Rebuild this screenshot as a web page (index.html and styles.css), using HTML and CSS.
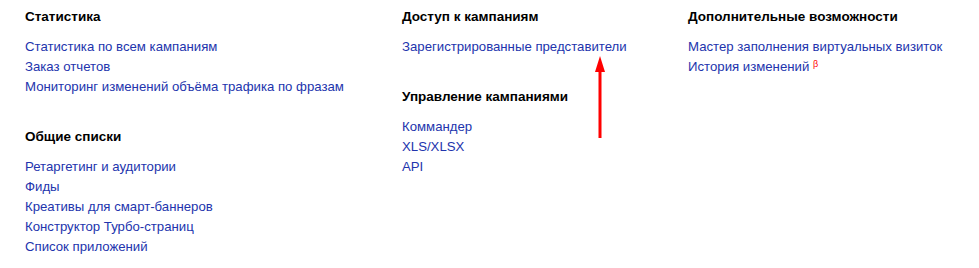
FILE: index.html
```html
<!DOCTYPE html>
<html lang="ru">
<head>
<meta charset="utf-8">
<link rel="stylesheet" href="styles.css">
</head>
<body>
<div class="page">
  <div class="col col-1">
    <section class="group">
      <h3 class="title">Статистика</h3>
      <ul class="links">
        <li><a href="#">Статистика по всем кампаниям</a></li>
        <li><a href="#">Заказ отчетов</a></li>
        <li><a href="#">Мониторинг изменений объёма трафика по фразам</a></li>
      </ul>
    </section>
    <section class="group">
      <h3 class="title">Общие списки</h3>
      <ul class="links">
        <li><a href="#">Ретаргетинг и аудитории</a></li>
        <li><a href="#">Фиды</a></li>
        <li><a href="#">Креативы для смарт-баннеров</a></li>
        <li><a href="#">Конструктор Турбо-страниц</a></li>
        <li><a href="#">Список приложений</a></li>
      </ul>
    </section>
  </div>
  <div class="col col-2">
    <section class="group">
      <h3 class="title">Доступ к кампаниям</h3>
      <ul class="links">
        <li><a href="#">Зарегистрированные представители</a></li>
      </ul>
    </section>
    <section class="group">
      <h3 class="title">Управление кампаниями</h3>
      <ul class="links">
        <li><a href="#">Коммандер</a></li>
        <li><a href="#">XLS/XLSX</a></li>
        <li><a href="#">API</a></li>
      </ul>
    </section>
    <svg class="arrow" width="12" height="84" viewBox="0 0 12 84">
      <polygon points="6,0 11,16 1,16" fill="#ff0000"/>
      <rect x="4.5" y="14" width="3" height="68" fill="#ff0000"/>
    </svg>
  </div>
  <div class="col col-3">
    <section class="group">
      <h3 class="title">Дополнительные возможности</h3>
      <ul class="links">
        <li><a href="#">Мастер заполнения виртуальных визиток</a></li>
        <li><a href="#">История изменений</a> <sup class="beta">β</sup></li>
      </ul>
    </section>
  </div>
</div>
</body>
</html>
```
FILE: styles.css
```css
html, body {
  margin: 0;
  padding: 0;
  background: #ffffff;
}
body {
  font-family: "Liberation Sans", Arial, sans-serif;
  color: #000;
}
.page {
  display: grid;
  grid-template-columns: 377px 286px 1fr;
  padding: 7px 0 0 25px;
}
.col {
  display: flex;
  flex-direction: column;
  gap: 30px;
  position: relative;
}
.title {
  margin: 0 0 10px;
  font-size: 13.5px;
  line-height: 20px;
  font-weight: bold;
}
.links {
  list-style: none;
  margin: 0;
  padding: 0;
}
.links li {
  font-size: 13.2px;
  line-height: 20px;
}
.links a {
  color: #2234ad;
  text-decoration: none;
}
.beta {
  color: #ff0000;
  font-size: 9px;
  vertical-align: top;
  position: relative;
  top: -3px;
}
.arrow {
  position: absolute;
  left: 192px;
  top: 49px;
}
```
